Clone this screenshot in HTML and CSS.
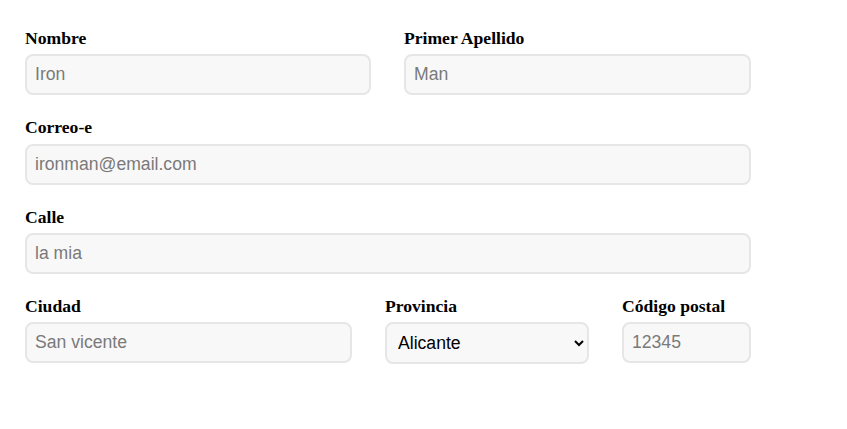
FILE: index.html
```html
<!DOCTYPE html>
<html lang="es">
<head>
<meta charset="utf-8">
<title>Formulario</title>
<link rel="stylesheet" href="styles.css">
</head>
<body>
<form class="form">
  <div class="row row-2">
    <div class="field">
      <label class="label" for="nombre">Nombre</label>
      <input class="input" id="nombre" type="text" placeholder="Iron">
    </div>
    <div class="field">
      <label class="label" for="apellido">Primer Apellido</label>
      <input class="input" id="apellido" type="text" placeholder="Man">
    </div>
  </div>
  <div class="row">
    <div class="field">
      <label class="label" for="correo">Correo-e</label>
      <input class="input" id="correo" type="email" placeholder="ironman@email.com">
    </div>
  </div>
  <div class="row">
    <div class="field">
      <label class="label" for="calle">Calle</label>
      <input class="input" id="calle" type="text" placeholder="la mia">
    </div>
  </div>
  <div class="row row-3">
    <div class="field">
      <label class="label" for="ciudad">Ciudad</label>
      <input class="input" id="ciudad" type="text" placeholder="San vicente">
    </div>
    <div class="field">
      <label class="label" for="provincia">Provincia</label>
      <select class="input select" id="provincia">
        <option>Alicante</option>
        <option>Valencia</option>
        <option>Castellón</option>
      </select>
    </div>
    <div class="field">
      <label class="label" for="cp">Código postal</label>
      <input class="input" id="cp" type="text" placeholder="12345">
    </div>
  </div>
</form>
</body>
</html>
```
FILE: styles.css
```css
html, body {
  margin: 0;
  background: #ffffff;
}

body {
  padding: 8px;
  font-family: "Liberation Serif", "Times New Roman", serif;
}

.form {
  width: 726px;
  padding: 20px 0 0 17px;
}

.row {
  display: grid;
  grid-template-columns: 1fr;
  column-gap: 33px;
  margin-bottom: 22px;
}

.row-2 {
  grid-template-columns: 346fr 347fr;
}

.row-3 {
  grid-template-columns: 327fr 204fr 129fr;
}

.field {
  display: flex;
  flex-direction: column;
  min-width: 0;
}

.label {
  display: block;
  font-family: "Liberation Serif", "Times New Roman", serif;
  font-weight: bold;
  font-size: 17.6px;
  line-height: 20.33px;
  color: #000;
  margin-bottom: 6px;
}

.input {
  box-sizing: border-box;
  width: 100%;
  height: 41px;
  margin: 0;
  padding: 0 8px;
  border: 2px solid #e6e6e6;
  border-radius: 8px;
  background: #f8f8f8;
  font-family: "Liberation Sans", Arial, sans-serif;
  font-size: 17.6px;
  color: #000;
  outline: none;
}

.input::placeholder {
  color: #7a7a7a;
  opacity: 1;
}

.select {
  height: 42px;
  padding-left: 7px;
  padding-right: 6px;
}
```
